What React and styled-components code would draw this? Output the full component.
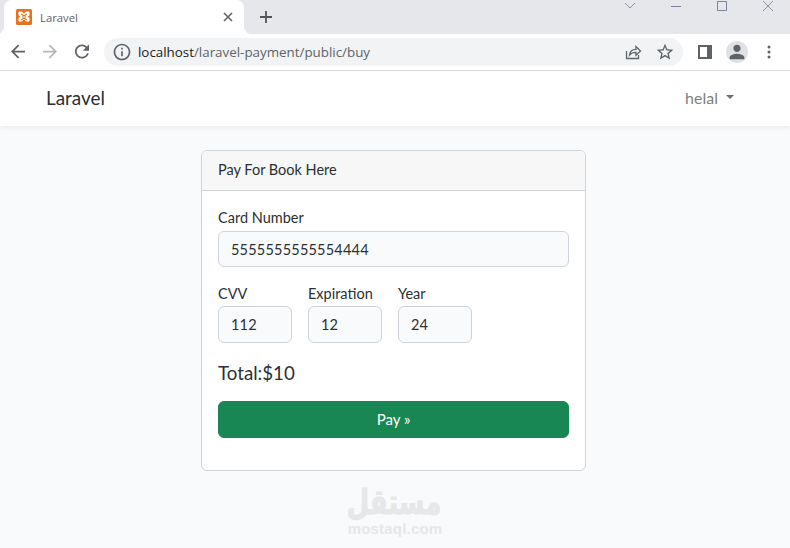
import React from "react";
import styled, { createGlobalStyle } from "styled-components";

const Global = createGlobalStyle`
  html, body { margin: 0; padding: 0; background: #f8fafc; }
  * { box-sizing: border-box; }
`;
const Page = styled.div`
  position: relative; width: 790px; height: 548px; overflow: hidden;
  display: flex; flex-direction: column; background: #f8fafc;
  font-family: "Lato", "Noto Sans", sans-serif; color: #2b2f33;
`;
const TabStrip = styled.div`
  height: 34px; flex: none; background: #e5e7ea; display: flex; align-items: flex-end; padding-left: 4px;
`;
const Tab = styled.div`
  position: relative; width: 240px; height: 34px; background: #fff; border-radius: 8px 8px 0 0;
  display: flex; align-items: center; padding: 0 0 0 12px;
  &::before, &::after { content: ""; position: absolute; bottom: 0; width: 8px; height: 8px; }
  &::before { left: -8px; background: radial-gradient(circle at 0 0, transparent 8px, #fff 8.5px); }
  &::after { right: -8px; background: radial-gradient(circle at 100% 0, transparent 8px, #fff 8.5px); }
`;
const TabTitle = styled.span`
  margin-left: 8px; flex: 1; font: 11.3px "Open Sans", sans-serif; color: #5f6368;
`;
const TabClose = styled.svg`width: 12px; height: 12px; margin-right: 10px; display: block;`;
const NewTab = styled.svg`width: 16px; height: 16px; margin: 0 0 9px 14px; display: block; flex: none;`;
const WindowControls = styled.div`
  margin-left: auto; align-self: flex-start; display: flex;
`;
const WindowButton = styled.svg`width: 46px; height: 12px; display: block;`;
const Toolbar = styled.div`
  height: 37px; flex: none; background: #fff; border-bottom: 1px solid #d9dadc;
  display: flex; align-items: center; padding: 0 0 1px 2px;
`;
const NavIcon = styled.svg`width: 32px; height: 21px; display: block; flex: none; fill: ${p => p.$color || "#5f6368"};`;
const Omnibox = styled.div`
  width: 579px; height: 28px; margin-left: 6px; border-radius: 14px; background: #f1f3f4;
  display: flex; align-items: center; padding: 0 2px 0 8px; flex: none;
`;
const InfoIcon = styled.svg`width: 20px; height: 20px; fill: #5f6368; flex: none; margin-right: 6px;`;
const Url = styled.div`
  flex: 1; font: 13.37px "Open Sans", sans-serif; color: #5f6368; white-space: nowrap;
  b { font-weight: 400; color: #202124; }
`;
const ShareIcon = styled.svg`width: 20px; height: 20px; margin-right: 12px; flex: none;`;
const StarIcon = styled.svg`width: 20px; height: 20px; margin-right: 6px; flex: none; fill: #5f6368;`;
const PanelIcon = styled.svg`width: 14px; height: 14px; margin-left: 15px; flex: none;`;
const Avatar = styled.div`
  width: 22px; height: 22px; border-radius: 50%; background: #e0e1e4; margin: 0 10px 0 14px; flex: none;
  display: flex; align-items: center; justify-content: center;
`;
const PersonIcon = styled.svg`width: 22px; height: 22px; flex: none; fill: #5f6368;`;
const MenuIcon = styled.svg`width: 4px; height: 14px; margin-left: 9px; flex: none; fill: #5f6368;`;
const Navbar = styled.nav`
  height: 55px; flex: none; background: #fff; box-shadow: 0 2px 4px rgba(0,0,0,.06);
  display: flex; align-items: center; padding: 0 56px 2px 46px; position: relative;
`;
const Brand = styled.div`font-size: 18.9px; flex: 1;`;
const UserName = styled.div`font-size: 16px; color: #7d7f80; display: flex; align-items: center; gap: 8px;`;
const Caret = styled.span`
  width: 0; height: 0; border: 4.6px solid transparent; border-top-color: #6c6e70; border-bottom: 0; margin-bottom: 2px;
`;
const Main = styled.main`
  flex: 1; display: flex; justify-content: center; padding: 24px 3px 0 0; align-items: flex-start;
`;
const Card = styled.section`
  width: 385px; height: 321px; background: #fff; border: 1px solid #d2d3d5; border-radius: 6px; overflow: hidden;
`;
const CardHeader = styled.header`
  height: 40px; background: #f7f7f7; border-bottom: 1px solid #d2d3d5;
  display: flex; align-items: center; padding: 0 16px 2px; font-size: 14.5px;
`;
const CardBody = styled.div`padding: 17px 16px 0;`;
const Label = styled.label`display: block; font-size: 14.5px; line-height: 20px; margin-bottom: ${p => p.$tight ? "2px" : "3px"};`;
const Input = styled.input`
  display: block; width: ${p => p.$width || "100%"}; height: ${p => p.$height || "36px"};
  background: #f8fafc; border: 1px solid #ced4da; border-radius: 6px; padding: 0 12px;
  font: 14.5px "Lato", sans-serif; color: #2b2f33; letter-spacing: .2px; outline: none;
`;
const Row = styled.div`display: flex; gap: 16px; margin-top: 17px;`;
const Total = styled.div`font-size: 18.7px; line-height: 24px; margin-top: 18px;`;
const PayButton = styled.button`
  display: block; width: 100%; height: 37px; margin-top: 16px; padding: 0 0 2px; background: #198754; color: #fff;
  border: 1px solid #198754; border-radius: 6px; font: 15px "Lato", sans-serif;
`;
const Watermark = styled.div`
  position: absolute; left: 346px; top: 488px; width: 98px; text-align: center; color: #e6e7e9;
  font-family: "DejaVu Sans", sans-serif; font-weight: 700;
`;
const WatermarkArabic = styled.div`
  font-size: 30px; line-height: 30px; direction: rtl; white-space: nowrap;
  transform: translate(4px, -1px) scale(.86, 1.15); -webkit-text-stroke: 1px #e6e7e9;
`;
const WatermarkLatin = styled.div`
  font-family: "Liberation Sans", sans-serif; font-size: 15px; line-height: 15px; letter-spacing: .2px; margin-top: 3px;
`;

const P = { back: "M20 11H7.83l5.59-5.59L12 4l-8 8 8 8 1.41-1.41L7.83 13H20v-2z",
  reload: "M17.65 6.35A7.958 7.958 0 0012 4c-4.42 0-7.99 3.58-7.99 8s3.57 8 7.99 8c3.73 0 6.84-2.55 7.73-6h-2.08A5.99 5.99 0 0112 18c-3.31 0-6-2.69-6-6s2.69-6 6-6c1.66 0 3.14.69 4.22 1.78L13 11h7V4l-2.35 2.35z",
  info: "M11 7h2v2h-2zm0 4h2v6h-2zm1-9C6.48 2 2 6.48 2 12s4.48 10 10 10 10-4.48 10-10S17.52 2 12 2zm0 18c-4.41 0-8-3.59-8-8s3.59-8 8-8 8 3.59 8 8-3.59 8-8 8z",
  star: "M22 9.24l-7.19-.62L12 2 9.19 8.63 2 9.24l5.46 4.73L5.82 21 12 17.27 18.18 21l-1.63-7.03L22 9.24zM12 15.4l-3.76 2.27 1-4.28-3.32-2.88 4.38-.38L12 6.1l1.71 4.04 4.38.38-3.32 2.88 1 4.28L12 15.4z",
  person: "M12 12c2.21 0 4-1.79 4-4s-1.79-4-4-4-4 1.79-4 4 1.79 4 4 4zm0 2c-2.67 0-8 1.34-8 4v2h16v-2c0-2.66-5.33-4-8-4z" };

const XamppIcon = styled.svg`width: 16px; height: 16px; flex: none;`;
const Xampp = () => (
  <XamppIcon viewBox="0 0 16 16">
    <rect width="16" height="16" rx="1.5" fill="#e8731c" />
    <path d="M3.5 2.5h2.2c.9 0 1 .9 1.2 1.4h2.2c.2-.5.3-1.4 1.2-1.4h2.2c.6 0 1 .4 1 1v2.4c0 .7-.9.9-1.4 1.1v1c.5.2 1.4.4 1.4 1.1v2.4c0 .6-.4 1-1 1h-2.2c-.9 0-1-.9-1.2-1.4H6.900c-.2.5-.3 1.400-1.200 1.400H3.500c-.6 0-1-.4-1-1v-2.400c0-.7.9-.9 1.400-1.100v-1c-.5-.2-1.400-.4-1.400-1.100V3.500c0-.6.4-1 1-1z" fill="#fff" />
    <path d="M5 5l2.200 1.500h1.600L11 5M5 11l2.200-1.500h1.600L11 11M6 8h4" fill="none" stroke="#e8731c" strokeWidth="1.200" />
  </XamppIcon>
);

export default function App() {
  return (
    <Page>
      <Global />
      <TabStrip>
        <Tab>
          <Xampp />
          <TabTitle>Laravel</TabTitle>
          <TabClose viewBox="0 0 12 12"><path d="M2 2l8 8M10 2l-8 8" stroke="#5f6368" strokeWidth="1.6" /></TabClose>
        </Tab>
        <NewTab viewBox="0 0 16 16"><path d="M8 2v12M2 8h12" stroke="#51555a" strokeWidth="1.8" /></NewTab>
        <WindowControls>
          <WindowButton viewBox="0 0 46 12"><path d="M19 3l5 5 5-5" fill="none" stroke="#8d91a3" /></WindowButton>
          <WindowButton viewBox="0 0 46 12"><path d="M19 6.500h10" stroke="#7d8296" /></WindowButton>
          <WindowButton viewBox="0 0 46 12"><path d="M19.500 1.500h9v9h-9z" fill="none" stroke="#7d8296" /></WindowButton>
          <WindowButton viewBox="0 0 46 12"><path d="M19 1l10 10M29 1L19 11" stroke="#8d91a3" /></WindowButton>
        </WindowControls>
      </TabStrip>
      <Toolbar>
        <NavIcon viewBox="-6 0 36 24"><path d={P.back} /></NavIcon>
        <NavIcon viewBox="-6 0 36 24" $color="#b5b7ba"><path d={P.back} transform="rotate(180 12 12)" /></NavIcon>
        <NavIcon viewBox="-6 0 36 24"><path d={P.reload} /></NavIcon>
        <Omnibox>
          <InfoIcon viewBox="0 0 24 24"><path d={P.info} /></InfoIcon>
          <Url><b>localhost</b>/laravel-payment/public/buy</Url>
          <ShareIcon viewBox="0 0 20 20">
            <path d="M3.500 9v7.500h12V13M6.500 13c.4-3.600 3-5.600 6.500-5.600V4.500l4.500 4.500-4.500 4.300v-3c-2.800 0-5 .8-6.500 2.700z" fill="none" stroke="#5f6368" strokeWidth="1.300" />
          </ShareIcon>
          <StarIcon viewBox="0 0 24 24"><path d={P.star} /></StarIcon>
        </Omnibox>
        <PanelIcon viewBox="0 0 14 14">
          <path fillRule="evenodd" d="M0 0h14v14H0zM2 2v10h7V2z" fill="#5f6368" />
        </PanelIcon>
        <Avatar>
          <PersonIcon viewBox="0 0 24 24"><path d={P.person} /></PersonIcon>
        </Avatar>
        <MenuIcon viewBox="0 0 4 14">
          <circle cx="2" cy="2" r="1.500" /><circle cx="2" cy="7" r="1.500" /><circle cx="2" cy="12" r="1.500" />
        </MenuIcon>
      </Toolbar>
      <Navbar>
        <Brand>Laravel</Brand>
        <UserName>helal <Caret /></UserName>
      </Navbar>
      <Main>
        <Card>
          <CardHeader>Pay For Book Here</CardHeader>
          <CardBody>
            <Label>Card Number</Label>
            <Input readOnly defaultValue="5555555555554444" />
            <Row>
              <div><Label $tight>CVV</Label><Input readOnly defaultValue="112" $width="74px" $height="37px" /></div>
              <div><Label $tight>Expiration</Label><Input readOnly defaultValue="12" $width="74px" $height="37px" /></div>
              <div><Label $tight>Year</Label><Input readOnly defaultValue="24" $width="74px" $height="37px" /></div>
            </Row>
            <Total>Total:$10</Total>
            <PayButton>Pay »</PayButton>
          </CardBody>
        </Card>
      </Main>
      <Watermark>
        <WatermarkArabic>مستقل</WatermarkArabic>
        <WatermarkLatin>mostaql.com</WatermarkLatin>
      </Watermark>
    </Page>
  );
}
